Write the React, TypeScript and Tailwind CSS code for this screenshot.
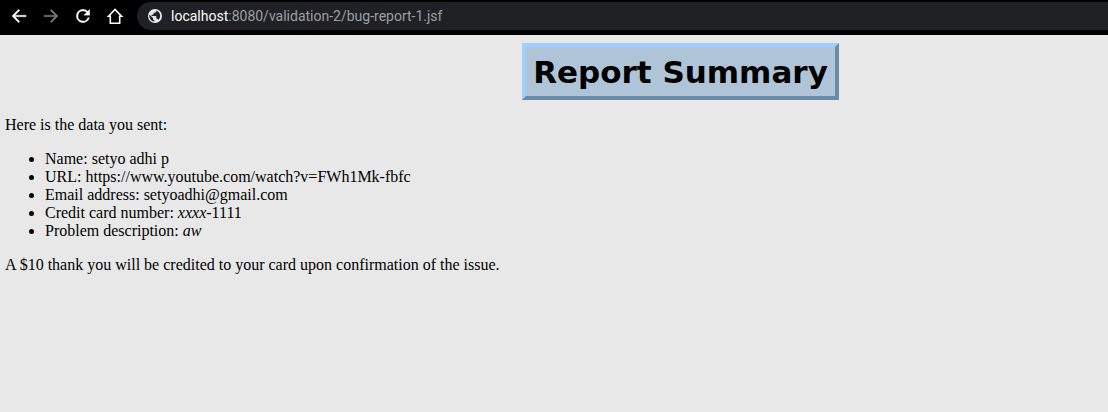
import type { ReactNode } from "react";

function NavButton({ label, color, children }: { label: string; color: string; children: ReactNode }) {
  return (
    <button type="button" aria-label={label} className={"flex h-8 w-8 items-center justify-center " + color}>
      {children}
    </button>
  );
}

function Icon({ d }: { d: string }) {
  return (
    <svg viewBox="0 0 24 24" className="h-5 w-5" fill="currentColor" stroke="currentColor" strokeWidth="0.4" aria-hidden="true">
      <path d={d} />
    </svg>
  );
}

function GlobeIcon() {
  return (
    <svg viewBox="0 0 14 14" className="h-3.5 w-3.5" aria-hidden="true">
      <circle cx="7" cy="7" r="7" fill="#e8eaed" />
      <path
        d="M8.300 1.400V2.300C8.300 3.100 7.700 3.700 6.900 3.700H5.600V5C5.600 5.400 5.300 5.700 4.900 5.700H3.600V7H7.600C8 7 8.300 7.300 8.300 7.700V9.700H9C9.600 9.700 10.100 10.100 10.300 10.900A5.600 5.600 0 0 0 8.300 1.400ZM1.500 5.700A5.600 5.600 0 0 0 6.300 12.600V11.100C5.600 11.100 5 10.500 5 9.800V9.100L1.500 5.700Z"
        fill="#202124"
      />
    </svg>
  );
}

function BrowserBar() {
  return (
    <header className="flex h-[35px] items-center bg-black pb-[3px] pl-[3px]">
      <nav className="flex" aria-label="Browser">
        <NavButton label="Back" color="text-white">
          <Icon d="M20.500 11H7.330l5.590-5.590L11.500 4l-8 8 8 8 1.410-1.410L7.330 13H20.500z" />
        </NavButton>
        <NavButton label="Forward" color="text-[#777777]">
          <Icon d="M3.500 11h13.170l-5.590-5.590L12.500 4l8 8-8 8-1.410-1.410L16.670 13H3.500z" />
        </NavButton>
        <NavButton label="Reload" color="text-white">
          <Icon d="M17.650 6.350A7.960 7.960 0 0 0 12 4a8 8 0 1 0 7.730 10h-2.080A6 6 0 1 1 12 6c1.660 0 3.140.690 4.220 1.780L13 11h7V4z" />
        </NavButton>
        <NavButton label="Home" color="text-white">
          <svg viewBox="0 0 20 20" className="h-5 w-5" fill="none" stroke="currentColor" strokeWidth="1.600" aria-hidden="true">
            <path d="M3.500 10.200 10 3.500 16.500 10.200H14.700V17.200H5.300V10.200Z" />
          </svg>
        </NavButton>
      </nav>
      <div className="ml-1.5 flex h-7 flex-1 items-center gap-[9px] rounded-l-full bg-[#202124] pl-[11px]">
        <GlobeIcon />
        <div className="font-['Roboto',sans-serif] text-sm text-[#9aa0a6]">
          <span className="text-white">localhost</span>:8080/validation-2/bug-report-1.jsf
        </div>
      </div>
    </header>
  );
}

export default function App() {
  return (
    <div className="min-h-screen bg-[#e8e8e8] font-['Liberation_Serif',serif] text-base leading-[18px] text-black">
      <BrowserBar />
      <main className="px-[5px] pt-2">
        <div className="flex justify-center pl-[253px]">
          <h1 className="border-4 border-t-[#a0d0ff] border-r-[#6b8ba8] border-b-[#6b8ba8] border-l-[#a0d0ff] bg-[#b0c4d8] px-[7px] pt-px font-['Verdana','DejaVu_Sans',sans-serif] text-[31px] leading-[48px] font-bold whitespace-nowrap">
            Report Summary
          </h1>
        </div>
        <p className="mt-4">Here is the data you sent:</p>
        <ul className="my-4 list-disc pl-10">
          <li>Name: setyo adhi p</li>
          <li>URL: https://www.youtube.com/watch?v=FWh1Mk-fbfc</li>
          <li>Email address: setyoadhi@gmail.com</li>
          <li>Credit card number: <i>xxxx</i>-1111</li>
          <li>Problem description: <i>aw</i></li>
        </ul>
        <p>A $10 thank you will be credited to your card upon confirmation of the issue.</p>
      </main>
    </div>
  );
}
